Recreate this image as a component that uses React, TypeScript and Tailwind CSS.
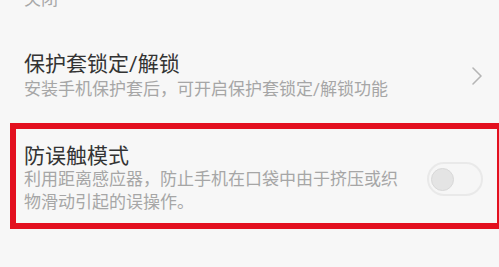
const FONT = "font-['Roboto','Noto_Sans_CJK_SC',sans-serif]";

function Chevron() {
  return (
    <svg width="12" height="20" viewBox="0 0 12 20" fill="none">
      <path d="M2 2l8 8-8 8" stroke="#b5b5b5" strokeWidth="1.6" strokeLinecap="round" strokeLinejoin="round" />
    </svg>
  );
}

function Toggle() {
  return (
    <div className="w-[56px] h-[34px] rounded-full border-2 border-[#e9e9e9] bg-[#f6f6f6] flex items-center pl-[2px]">
      <div className="w-[23px] h-[23px] rounded-full bg-[#e4e4e4] border border-[#d8d8d8]" />
    </div>
  );
}

export default function App() {
  return (
    <div className={`w-[499px] h-[267px] overflow-hidden bg-[#f7f7f7] ${FONT}`}>
      <div className="-mt-[12px] pl-[24px] text-[17px] leading-[22px] text-[#a8a8a8]">关闭</div>

      <div className="mt-[41px] pl-[24px] pr-[16px] flex items-center justify-between">
        <div>
          <div className="text-[21px] leading-[26px] text-[#333]">保护套锁定/解锁</div>
          <div className="mt-[1px] text-[17px] leading-[22px] text-[#a6a6a6]">安装手机保护套后，可开启保护套锁定/解锁功能</div>
        </div>
        <Chevron />
      </div>

      <div className="mt-[23px] ml-[10px] -mr-[4px] border-[6px] border-[#e3101f] pt-[15px] pb-[9px] pl-[8px] pr-[14px] flex items-center justify-between">
        <div>
          <div className="text-[21px] leading-[24px] text-[#333]">防误触模式</div>
          <div className="text-[17px] leading-[23px] text-[#a6a6a6]">
            利用距离感应器，防止手机在口袋中由于挤压或织
            <br />
            物滑动引起的误操作。
          </div>
        </div>
        <Toggle />
      </div>
    </div>
  );
}
